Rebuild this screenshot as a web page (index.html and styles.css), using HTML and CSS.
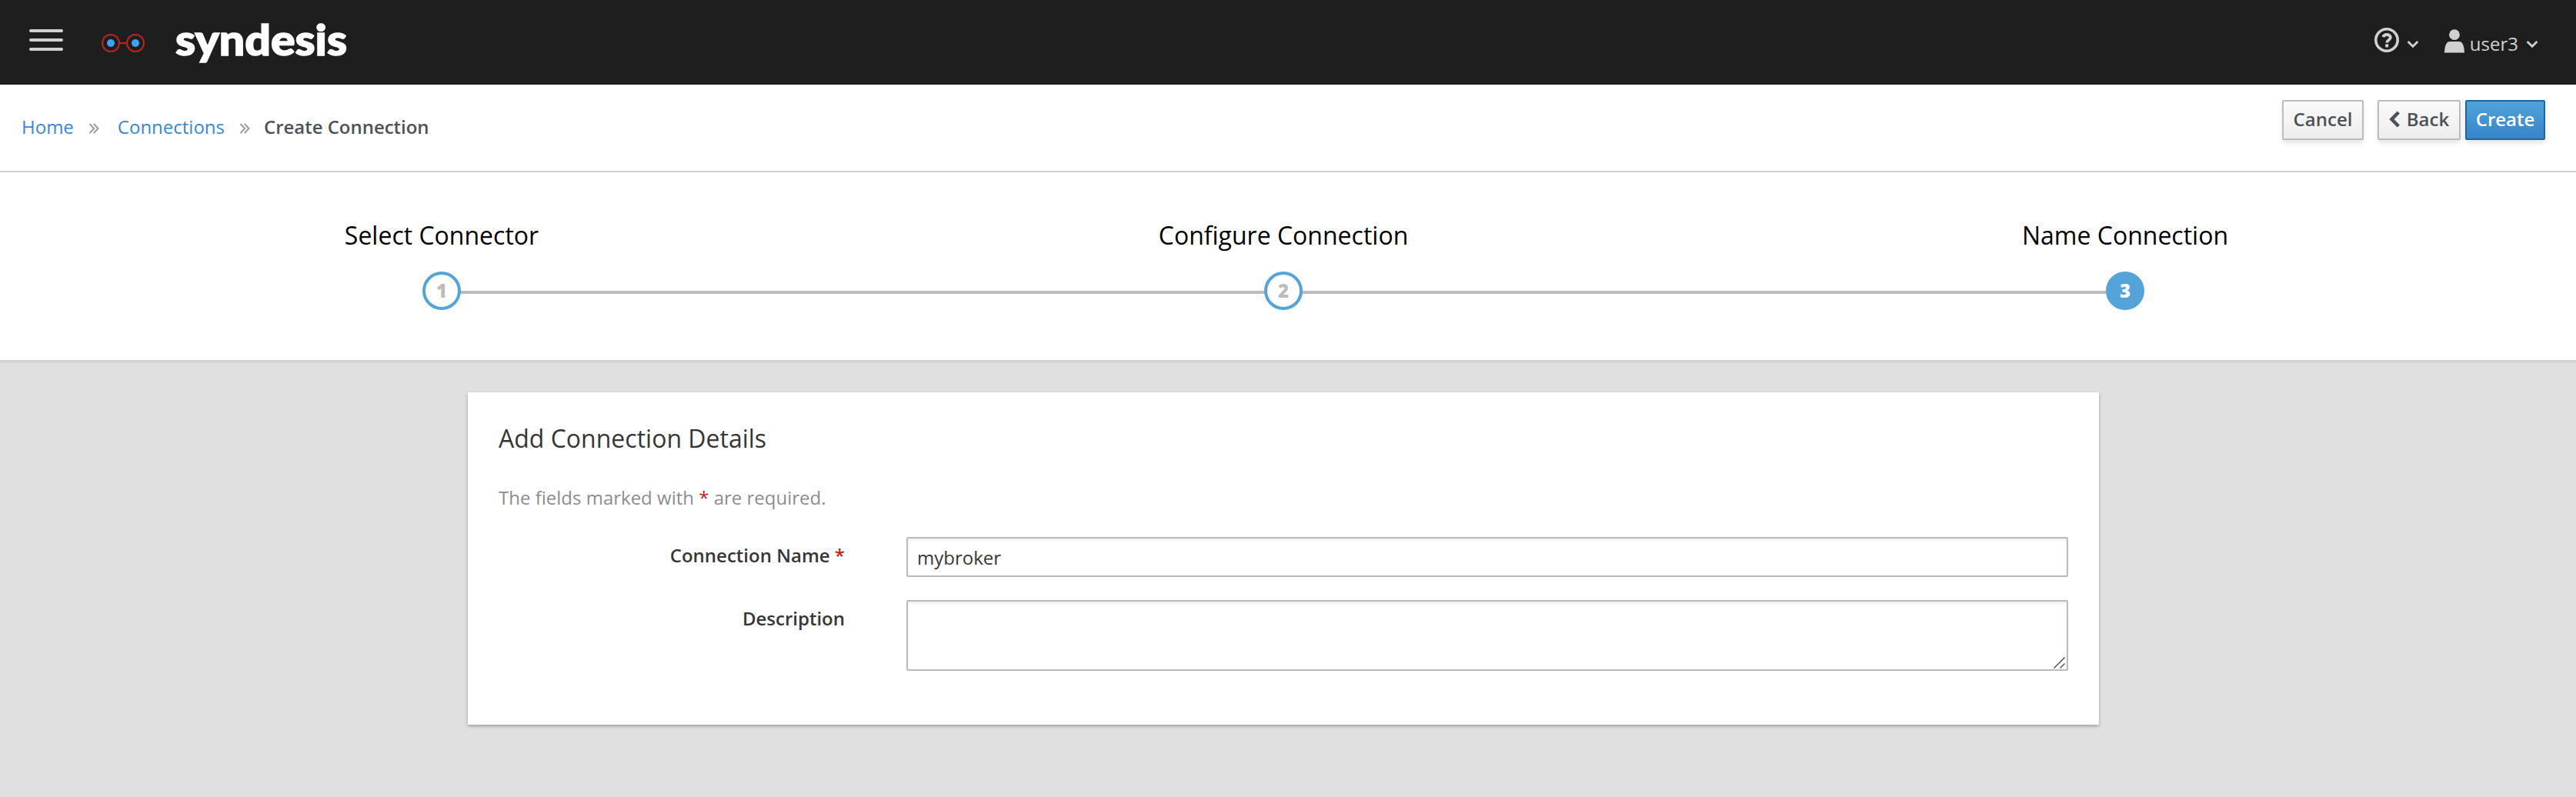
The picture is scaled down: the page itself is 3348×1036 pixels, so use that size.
FILE: index.html
```html
<!DOCTYPE html>
<html lang="en">
<head>
<meta charset="utf-8">
<title>Syndesis</title>
<link rel="stylesheet" href="styles.css">
</head>
<body>
<header class="masthead">
  <button class="menu-toggle" aria-label="Toggle navigation"><span></span><span></span><span></span></button>
  <svg class="logo-mark" width="58" height="26" viewBox="0 0 58 26"><g fill="none" stroke="#b9251b" stroke-width="2"><circle cx="13" cy="13" r="11"/><circle cx="45" cy="13" r="11"/><path d="M24 13h10"/></g><circle cx="13" cy="13" r="5" fill="#42a1f5"/><circle cx="45" cy="13" r="5" fill="#42a1f5"/></svg>
  <svg class="logo-text" width="234" height="100" viewBox="0 0 234 100"><text x="3" y="67" textLength="223" lengthAdjust="spacingAndGlyphs">syndesis</text></svg>
  <nav class="utilities">
    <svg class="help" width="32" height="32" viewBox="0 0 32 32"><circle cx="16" cy="16" r="14.2" fill="none" stroke="#d1d1d1" stroke-width="3.6"/><path d="M11.3 12.2C12.1 9.8 13.9 9 16.1 9c2.7 0 4.8 1.3 4.8 3.6 0 3.6-4.6 3.3-4.6 6.9" fill="none" stroke="#d1d1d1" stroke-width="3.8"/><path d="M14.2 21.4h4v4h-4z" fill="#d1d1d1"/></svg>
    <svg class="caret caret-help" width="16" height="11" viewBox="0 0 16 11"><path d="M1.6 2 8 8.3 14.4 2" fill="none" stroke="#d1d1d1" stroke-width="2.7"/></svg>
    <svg class="avatar" width="26" height="31" viewBox="0 0 26 31"><circle cx="13" cy="7.2" r="6.9" fill="#d1d1d1"/><path d="M0 30.5C.2 22 2.5 16 7 16h12c4.500 0 6.800 6 7 14.500z" fill="#d1d1d1"/></svg>
    <span class="username">user3</span>
    <svg class="caret" width="16" height="11" viewBox="0 0 16 11"><path d="M1.600 2 8 8.300 14.400 2" fill="none" stroke="#d1d1d1" stroke-width="2.700"/></svg>
  </nav>
</header>
<div class="toolbar">
  <nav class="breadcrumb">
    <a href="#">Home</a>
    <svg class="separator" width="14" height="14" viewBox="0 0 14 14"><path d="M1.500 1 7.200 7 1.500 13M6.800 1l5.700 6-5.700 6" fill="none" stroke="#9c9c9c" stroke-width="2"/></svg>
    <a href="#">Connections</a>
    <svg class="separator separator-last" width="14" height="14" viewBox="0 0 14 14"><path d="M1.500 1 7.200 7 1.500 13M6.800 1l5.700 6-5.700 6" fill="none" stroke="#9c9c9c" stroke-width="2"/></svg>
    <strong>Create Connection</strong>
  </nav>
  <div class="actions">
    <button class="btn btn-cancel">Cancel</button>
    <button class="btn btn-back"><svg width="15" height="22" viewBox="0 0 15 22"><path d="M12.300 2 3.500 11l8.800 9" fill="none" stroke="#4d5258" stroke-width="4.600"/></svg>Back</button>
    <button class="btn btn-primary">Create</button>
  </div>
</div>
<ol class="steps">
  <li class="step"><span class="step-title">Select Connector</span><span class="step-number">1</span></li>
  <li class="step"><span class="step-title">Configure Connection</span><span class="step-number">2</span></li>
  <li class="step active"><span class="step-title">Name Connection</span><span class="step-number">3</span></li>
</ol>
<main class="content">
  <form class="card">
    <h2>Add Connection Details</h2>
    <p class="hint">The fields marked with <span class="required">*</span> are required.</p>
    <div class="field">
      <label for="name">Connection Name <span class="required">*</span></label>
      <input id="name" type="text" value="mybroker">
    </div>
    <div class="field">
      <label for="description">Description</label>
      <div class="textarea-wrap">
        <textarea id="description"></textarea>
        <svg class="grip" width="15" height="15" viewBox="0 0 15 15"><path d="M.5 14.500 14.500 .5M8.500 14.500l6-6" fill="none" stroke="#555" stroke-width="1.500"/></svg>
      </div>
    </div>
  </form>
</main>
</body>
</html>
```
FILE: styles.css
```css
* { box-sizing: border-box; }
body {
  margin: 0;
  min-height: 1036px;
  background: #e0e0e0;
  color: #363636;
  font-family: "Open Sans", sans-serif;
  font-size: 24px;
  line-height: 40px;
}
svg { display: block; flex: none; }
button, input, textarea { font: inherit; }

.masthead {
  display: flex;
  align-items: flex-start;
  height: 110px;
  padding-left: 38px;
  background: #1e1e1e;
}
.menu-toggle {
  display: flex;
  flex-direction: column;
  gap: 8px;
  width: 44px;
  margin-top: 38px;
  padding: 0;
  border: 0;
  background: none;
}
.menu-toggle span { height: 4px; border-radius: 2px; background: #d1d1d1; }
.logo-mark { margin: 43px 0 0 49px; }
.logo-text { margin: 5px 0 0 36px; }
.logo-text text {
  fill: #fff;
  stroke: #fff;
  stroke-width: 1.6px;
  font: 900 56px Lato, sans-serif;
}
.utilities {
  display: flex;
  align-items: flex-start;
  margin: 36px 49px 0 auto;
  color: #d1d1d1;
}
.caret { margin: 16px 0 0 10px; }
.caret-help { margin-left: 10px; }
.avatar { margin: 2px 0 0 33px; }
.username { margin-left: 7px; line-height: 42px; }

.toolbar {
  display: flex;
  justify-content: space-between;
  height: 114px;
  padding: 20px 40px 0 28px;
  border-bottom: 2px solid #d1d1d1;
  background: #fff;
}
.breadcrumb { display: flex; align-items: center; height: 40px; margin-top: 15px; }
.breadcrumb a { color: #3987cd; text-decoration: none; }
.breadcrumb strong { color: #4d5258; font-weight: 600; letter-spacing: -.03px; }
.separator { margin: 3px 24px 0 19px; }
.separator-last { margin-right: 18px; }
.actions { display: flex; }
.btn {
  display: flex;
  justify-content: center;
  align-items: center;
  height: 52px;
  padding: 0 0 2px;
  border: 2px solid #bbb;
  border-radius: 2px;
  background: linear-gradient(#fafafa, #ededed);
  box-shadow: 0 4px 6px rgba(3, 3, 3, .1);
  color: #4d5258;
  font-weight: 600;
}
.btn-cancel { width: 106px; margin-right: 18px; }
.btn-back { gap: 8px; width: 108px; margin-right: 6px; }
.btn-primary {
  width: 104px;
  border-color: #21669f;
  background: linear-gradient(#52a2d8, #3585ca);
  color: #fff;
}

.steps {
  display: flex;
  height: 244px;
  margin: 0;
  padding: 64px 39px 0 27px;
  background: #fff;
  color: #000;
  list-style: none;
}
.step {
  position: relative;
  display: flex;
  flex: 1;
  flex-direction: column;
  align-items: center;
}
.step-title { margin-bottom: 29px; font-size: 32px; line-height: 36px; }
.step-number {
  z-index: 1;
  width: 50px;
  height: 50px;
  border: 4px solid #54a4da;
  border-radius: 50%;
  background: #fff;
  color: #bbb;
  font-weight: 800;
  line-height: 42px;
  text-align: center;
}
.active .step-number { background: #54a4da; color: #fff; }
/* connector running to the next step */
.step:not(:last-child)::after {
  content: "";
  position: absolute;
  top: 90px;
  left: 50%;
  width: 100%;
  height: 4px;
  background: #bbb;
}

.content {
  padding-top: 40px;
  border-top: 2px solid #cfcfcf;
  box-shadow: inset 0 2px #d6d6d6;
}
.card {
  width: 2120px;
  height: 432px;
  margin-left: 608px;
  padding: 40px;
  background: #fff;
  box-shadow: 0 2px 4px rgba(3, 3, 3, .3);
}
.card h2 { margin: 0; font-size: 32px; font-weight: 400; line-height: 40px; }
.hint { margin: 37px 0 31px; color: #8b8d8f; }
.required { color: #bd2419; }
.field { display: grid; grid-template-columns: 450px 1510px; column-gap: 80px; margin-bottom: 30px; }
.field label { padding-top: 4px; font-weight: 600; text-align: right; }
.field input, .field textarea {
  display: block;
  width: 100%;
  height: 52px;
  padding: 0 12px;
  border: 2px solid #bbb;
  border-radius: 2px;
  background: #fff;
  box-shadow: inset 0 2px 4px rgba(3, 3, 3, .08);
  color: #363636;
  outline: none;
}
.field textarea { height: 92px; resize: none; }
.textarea-wrap { position: relative; }
.grip { position: absolute; right: 4px; bottom: 3px; }
```
